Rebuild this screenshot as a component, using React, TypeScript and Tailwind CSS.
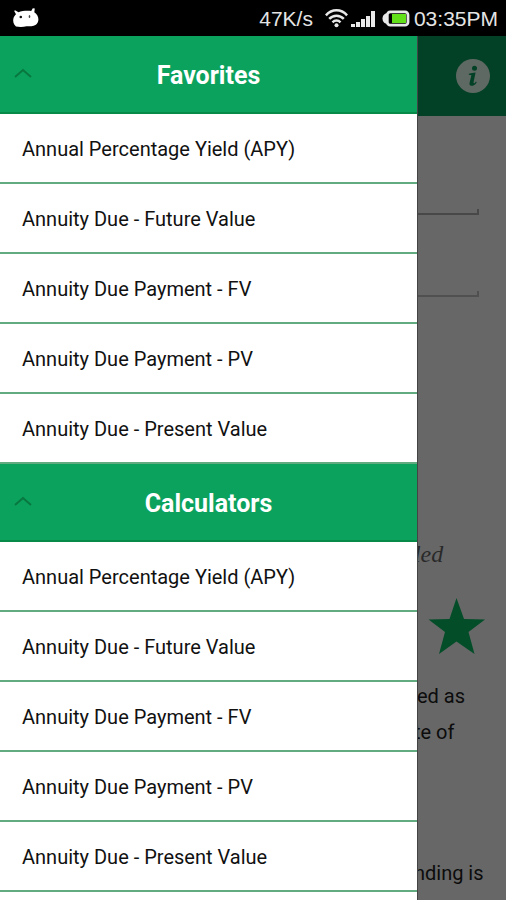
import React from "react";

const calculators = [
  "Annual Percentage Yield (APY)",
  "Annuity Due - Future Value",
  "Annuity Due Payment - FV",
  "Annuity Due Payment - PV",
  "Annuity Due - Present Value",
];

type SectionProps = {
  title: string;
  items: string[];
};

const StatusBar: React.FC = () => (
  <header className="h-9 shrink-0 bg-black text-[#e4e4e4] flex items-center pl-3 pr-2 font-['Liberation_Sans',Arial,sans-serif] text-[21px] leading-none">
    <svg className="w-[27px] h-5" viewBox="0 0 27 20" aria-hidden="true">
      <path
        d="M3 2.200 L6.500 4.200 C10 2.800 15.500 2.400 19.200 3 L20.800 .3 L22.800 .6 L22.300 4.200 C25 6 26.500 8.500 26.400 11.500 C26.300 15 24 17.700 20.500 18 C18.500 18.400 16.500 18 14.500 18.300 C11.500 19.200 7 19.200 4 18.600 C1.500 16.500 .6 13 1.500 10 C2 8.300 3 7.200 4 6.200 L2.200 3 Z"
        fill="#fff"
      />
      <circle cx="8.800" cy="9" r="1.300" fill="#111" />
      <ellipse cx="17.500" cy="8.500" rx=".8" ry="1.600" fill="#444" />
    </svg>
    <span className="ml-auto">47K/s</span>
    <svg className="ml-3 w-[23px] h-5" viewBox="0 0 23 20" aria-hidden="true">
      <g fill="none" stroke="#e8e8e8" strokeWidth="2.500">
        <path d="M.9 7.300 C7 .7 16 .7 22.100 7.300" />
        <path d="M4.200 10.900 C8.300 6.600 14.700 6.600 18.800 10.900" />
        <path d="M7.500 14.300 C9.800 11.900 13.200 11.900 15.500 14.300" />
      </g>
      <circle cx="11.500" cy="17.200" r="2" fill="#e8e8e8" />
    </svg>
    <svg className="ml-[3px] w-6 h-5" viewBox="0 0 24 20" fill="#e8e8e8" aria-hidden="true">
      <rect x="0" y="16" width="4" height="3" />
      <rect x="5" y="14" width="4" height="5" />
      <rect x="10" y="11" width="4" height="8" />
      <rect x="15" y="8" width="4" height="11" />
      <rect x="20" y="3" width="4" height="16" />
    </svg>
    <svg className="ml-[7px] w-7 h-5" viewBox="0 0 28 20" aria-hidden="true">
      <rect x="5.300" y="3.800" width="20.700" height="13.400" rx="3" fill="none" stroke="#e8e8e8" strokeWidth="2.800" />
      <path d="M5 5.500 H3.500 Q.5 7 .5 10.500 Q.5 14 3.500 15.500 H5 Z" fill="#e8e8e8" />
      <rect x="10" y="6" width="14" height="9" fill="#62e019" />
    </svg>
    <span className="ml-1">03:35PM</span>
  </header>
);

const Section: React.FC<SectionProps> = ({ title, items }: SectionProps) => (
  <section>
    <h2>
      <button
        type="button"
        aria-expanded="true"
        className="w-full h-[78px] pt-1 bg-[#0ba25e] border-b-2 border-[#078a47] grid grid-cols-[46px_1fr_46px] items-center text-white text-[25px] leading-8 font-bold"
      >
        <svg className="ml-[14px] w-[18px] h-[10px] mb-[6px]" viewBox="0 0 18 10" fill="none" aria-hidden="true">
          <path d="M1 9 L9 2 L17 9" stroke="#08783f" strokeWidth="2" />
        </svg>
        <span>{title}</span>
      </button>
    </h2>
    <ul>
      {items.map((item) => (
        <li key={item}>
          <a
            href="#"
            className="flex items-center h-[70px] px-[22px] pt-[2px] border-b-2 border-[#62aa80] text-[20px] leading-6 text-[#111]"
          >
            {item}
          </a>
        </li>
      ))}
    </ul>
  </section>
);

const DimmedPage: React.FC = () => (
  <main className="flex-1 min-w-0 overflow-hidden bg-[#676767] border-l border-[#444] flex flex-col items-start text-[20px] leading-9 text-[#0c0c0c] whitespace-nowrap">
    <div className="w-full h-20 shrink-0 bg-[#034126] flex items-center justify-end pr-4">
      <button type="button" aria-label="Info">
        <svg className="w-[34px] h-[34px]" viewBox="0 0 34 34" aria-hidden="true">
          <circle cx="17" cy="17" r="17" fill="#5f6964" />
          <circle cx="18.500" cy="9.200" r="2.500" fill="#034126" />
          <path
            d="M12.800 14.800 Q16 13.600 19.600 13.400 L17.600 23 Q17.300 24.700 18.500 24.200 L20 22.600 L20.700 23.400 Q18.500 26.800 15.400 26.800 Q13 26.600 13.600 23.700 L15.400 16.300 L12.800 15.800 Z"
            fill="#034126"
          />
        </svg>
      </button>
    </div>
    <div className="self-stretch mr-[27px] flex flex-col">
      <input
        aria-label="Rate"
        className="w-full mt-[93px] h-[6px] border-b-2 border-r-2 border-[#484848] outline-none"
      />
      <input
        aria-label="Periods"
        className="w-full mt-[76px] h-[6px] border-b-2 border-r-2 border-[#505050] outline-none"
      />
    </div>
    <p className="mt-[239px] -ml-1 font-['Liberation_Serif',serif] italic text-[24px] text-[#292929]">led</p>
    <button type="button" aria-label="Add to favorites" className="mt-[25px] ml-[10px]">
      <svg className="w-[58px] h-[58px]" viewBox="0 0 58 58" aria-hidden="true">
        <path
          d="M28.500 1 L36 22 L57 22.500 L40.500 35 L46.500 57 L28.500 44.500 L11 57 L17 35 L.5 22.500 L21.500 22 Z"
          fill="#034d29"
        />
      </svg>
    </button>
    <p className="mt-[23px] -ml-px">ed as</p>
    <p className="-ml-1">te of</p>
    <p className="mt-[105px] -ml-1">nding is</p>
  </main>
);

const App: React.FC = () => {
  return (
    <div className="h-screen flex flex-col overflow-hidden bg-white font-[Roboto,sans-serif]">
      <StatusBar />
      <div className="flex-1 min-h-0 flex">
        <nav aria-label="Calculators" className="w-[82.4%] shrink-0 overflow-hidden bg-white">
          <Section title="Favorites" items={calculators} />
          <Section title="Calculators" items={calculators} />
        </nav>
        <DimmedPage />
      </div>
    </div>
  );
};

export default App;
